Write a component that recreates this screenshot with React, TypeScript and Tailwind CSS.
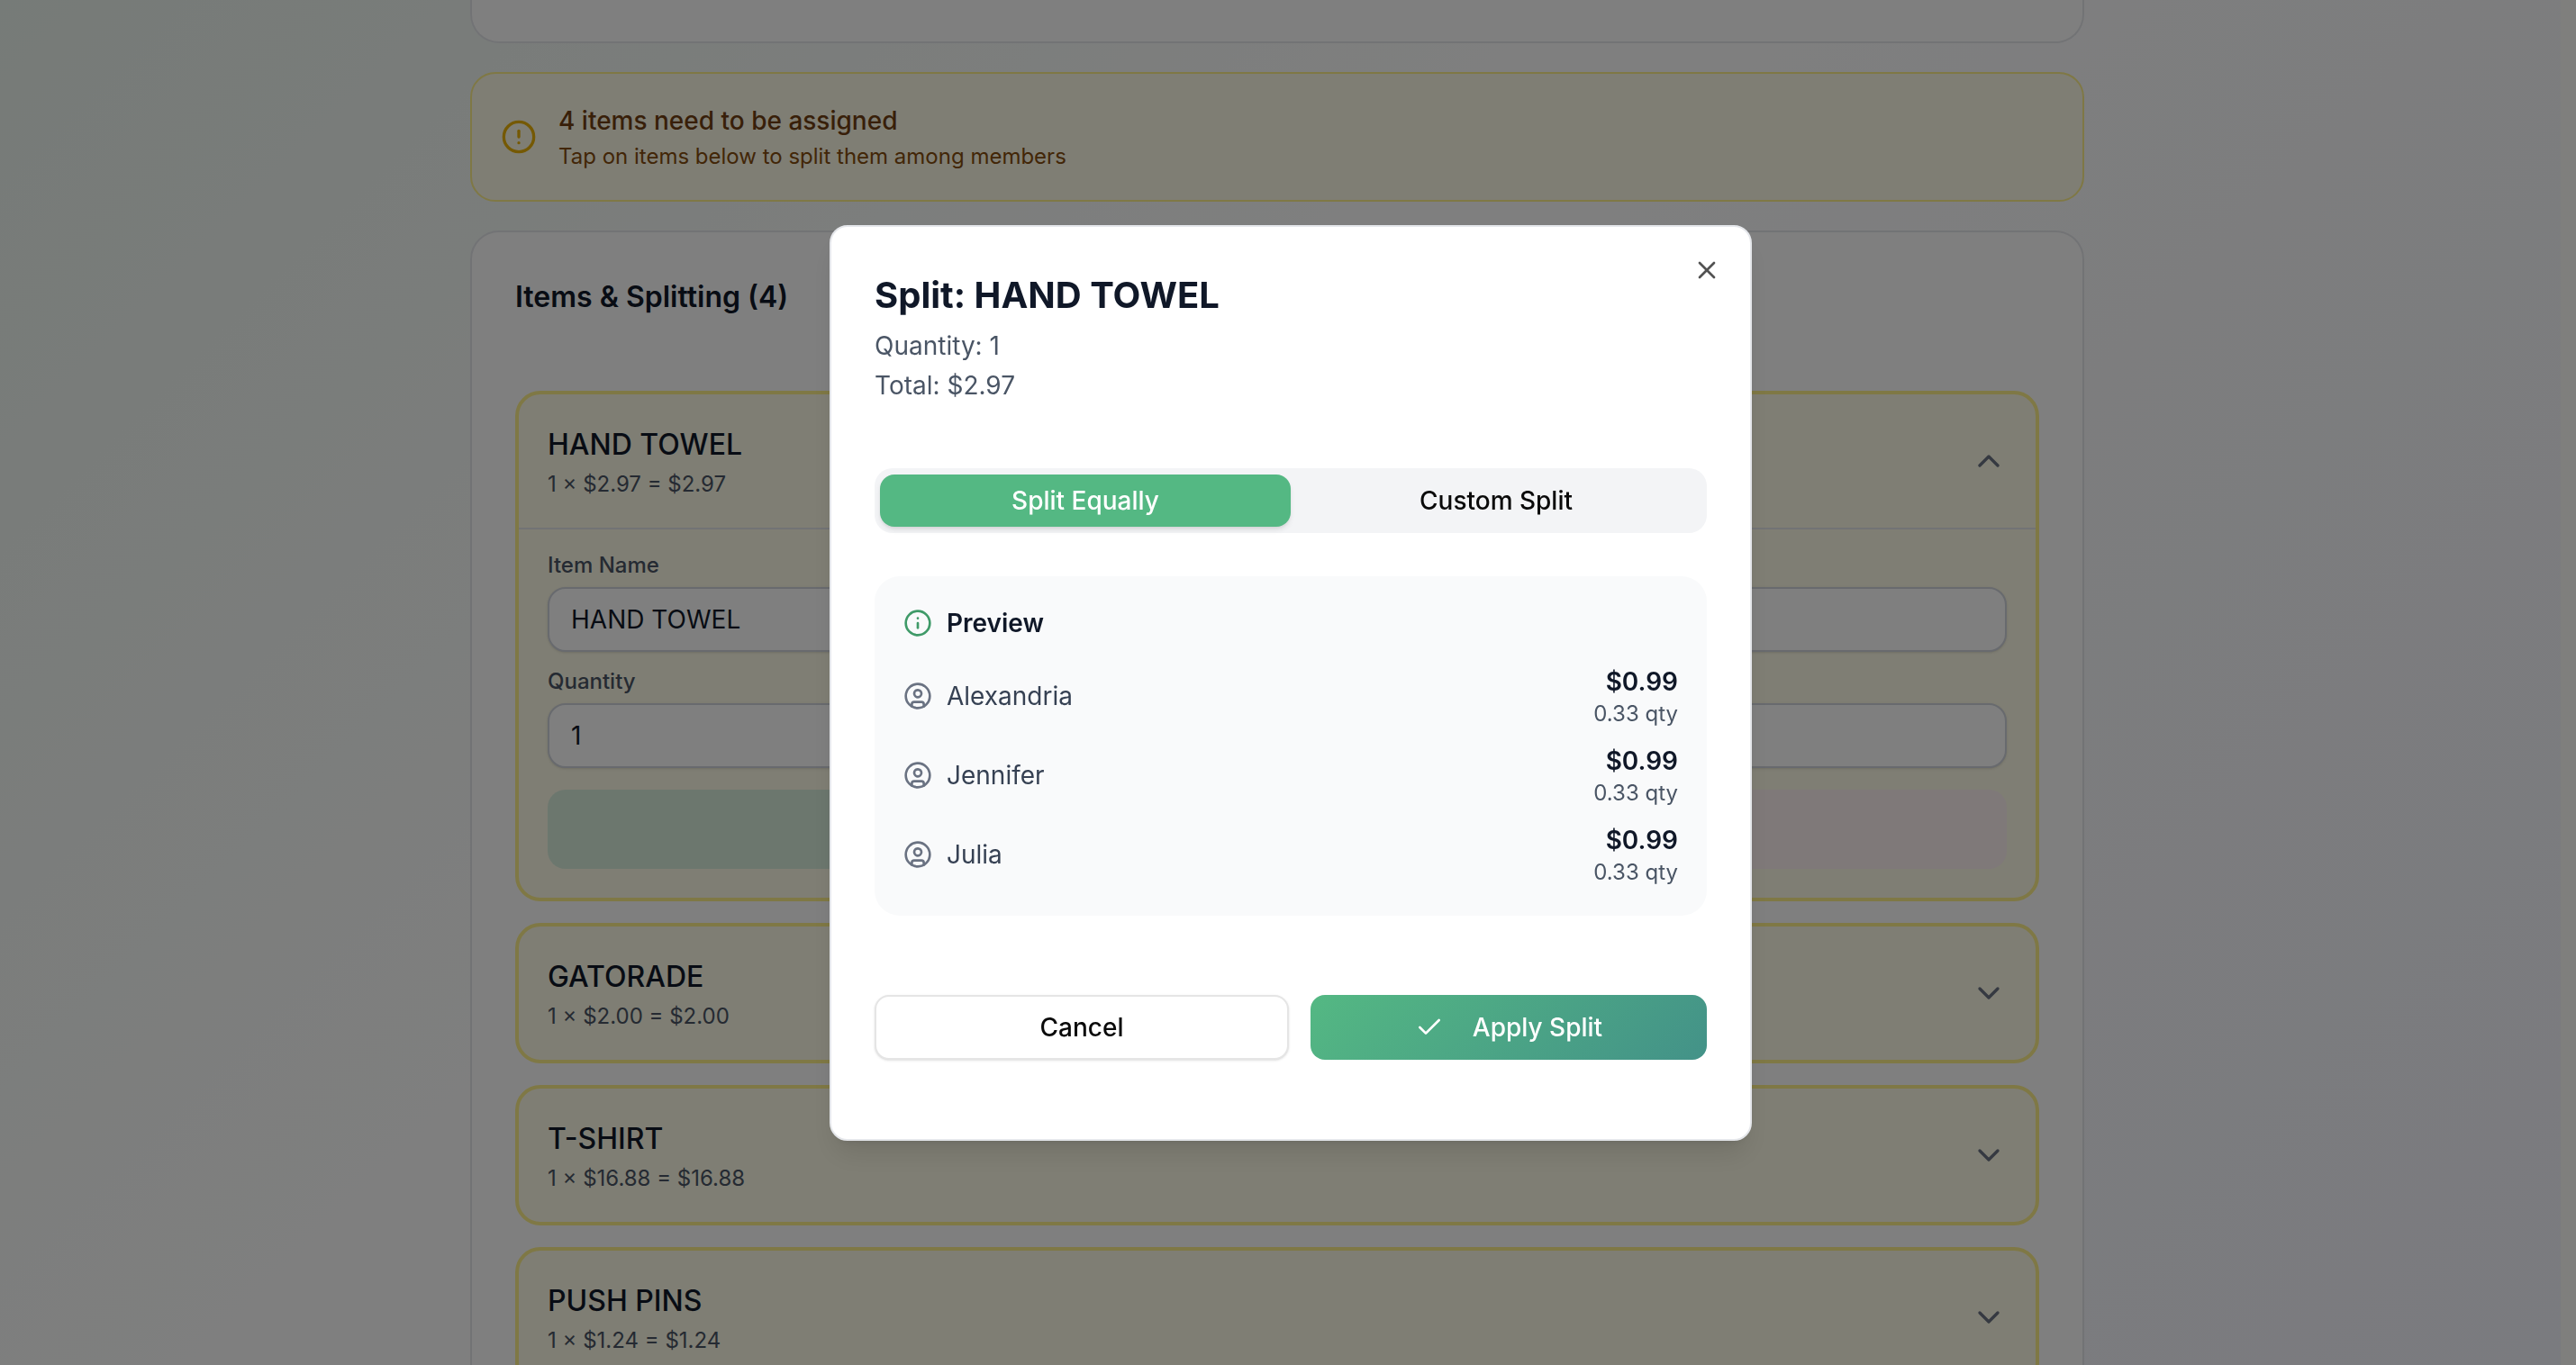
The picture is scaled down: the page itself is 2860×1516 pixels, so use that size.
import { useState } from "react";
import { Check, ChevronDown, ChevronUp, CircleAlert, CircleUser, Info, X } from "lucide-react";

interface Item {
  name: string;
  qty: number;
  price: number;
}

const items: Item[] = [
  { name: "HAND TOWEL", qty: 1, price: 2.97 },
  { name: "GATORADE", qty: 1, price: 2 },
  { name: "T-SHIRT", qty: 1, price: 16.88 },
  { name: "PUSH PINS", qty: 1, price: 1.24 },
];

const members = ["Alexandria", "Jennifer", "Julia"];

const money = (n: number) => `$${n.toFixed(2)}`;

function Field({ id, label, value }: { id: string; label: string; value: string }) {
  return (
    <div className="flex flex-col gap-2">
      <label htmlFor={id} className="text-[24px] leading-8 font-medium text-gray-600">
        {label}
      </label>
      <input
        id={id}
        defaultValue={value}
        className="h-18 w-full rounded-[20px] border-2 border-gray-300 bg-white px-6 text-[28px] text-gray-900 shadow-sm outline-none"
      />
    </div>
  );
}

function ItemCard({ item, open, onToggle }: { item: Item; open: boolean; onToggle: () => void }) {
  const Chevron = open ? ChevronUp : ChevronDown;

  return (
    <div className="shrink-0 rounded-[28px] border-4 border-[#fef08a] bg-[#fefce8]">
      <button
        onClick={onToggle}
        aria-expanded={open}
        className="flex w-full items-center justify-between p-8 text-left"
      >
        <span className="flex flex-col gap-1">
          <span className="text-[32px] leading-12 font-medium text-gray-900">{item.name}</span>
          <span className="text-[24px] leading-8 text-gray-600">
            {item.qty} × {money(item.price)} = {money(item.qty * item.price)}
          </span>
        </span>
        <Chevron size={40} className="text-gray-500" />
      </button>

      {open && (
        <div className="border-t-2 border-gray-200 px-8 pt-6 pb-8">
          <div className="flex flex-col gap-[17px]">
            <Field id="item-name" label="Item Name" value={item.name} />
            <Field id="item-qty" label="Quantity" value={String(item.qty)} />
          </div>
          <div className="mt-6 flex gap-4">
            <button aria-label="Split item" className="h-22 flex-1 rounded-[20px] bg-[#d9eedd]" />
            <button aria-label="Remove item" className="h-22 flex-1 rounded-[20px] bg-[#fef2f2]" />
          </div>
        </div>
      )}
    </div>
  );
}

function SplitDialog({ item }: { item: Item }) {
  const [mode, setMode] = useState<"equal" | "custom">("equal");
  const share = item.price / members.length;
  const shareQty = item.qty / members.length;

  const tab = "flex-1 rounded-[16px] text-[28px] leading-10 font-medium";
  const activeTab = "bg-[#54b883] text-white shadow-md";

  return (
    <div className="fixed inset-0 z-50 flex items-center justify-center bg-black/50 pl-1.5">
      <div
        role="dialog"
        aria-labelledby="split-title"
        className="relative w-full max-w-5xl rounded-[20px] border-2 border-gray-200 bg-white px-12 pt-12 pb-22 shadow-[0_20px_30px_-6px_rgba(0,0,0,0.1),0_8px_12px_-8px_rgba(0,0,0,0.1)]"
      >
        <button aria-label="Close" className="absolute top-8 right-8 text-[#0a0a0a] opacity-70">
          <X size={32} />
        </button>

        {/* Header */}
        <h2 id="split-title" className="text-[40px] leading-14 font-bold text-gray-900">
          Split: {item.name}
        </h2>
        <div className="mt-2 flex flex-col gap-1 text-[28px] leading-10 text-gray-600">
          <p>Quantity: {item.qty}</p>
          <p>Total: {money(item.price)}</p>
        </div>

        {/* Mode tabs */}
        <div role="tablist" className="mt-18 flex h-18 rounded-[20px] bg-gray-100 px-1.5 py-[7px]">
          <button
            role="tab"
            aria-selected={mode === "equal"}
            onClick={() => setMode("equal")}
            className={`${tab} ${mode === "equal" ? activeTab : "text-[#0a0a0a]"}`}
          >
            Split Equally
          </button>
          <button
            role="tab"
            aria-selected={mode === "custom"}
            onClick={() => setMode("custom")}
            className={`${tab} ${mode === "custom" ? activeTab : "text-[#0a0a0a]"}`}
          >
            Custom Split
          </button>
        </div>

        {/* Preview */}
        <div className="mt-12 rounded-[28px] bg-gray-50 p-8">
          <div className="flex items-center gap-4">
            <Info size={32} className="text-[#3f9a68]" />
            <h3 className="text-[28px] leading-10 font-semibold text-gray-900">Preview</h3>
          </div>
          <ul className="mt-[25px] flex flex-col gap-4">
            {members.map((name) => (
              <li key={name} className="flex items-center justify-between">
                <div className="flex items-center gap-4">
                  <CircleUser size={32} className="text-gray-500" />
                  <span className="text-[28px] leading-10 text-gray-700">{name}</span>
                </div>
                <div className="text-right">
                  <p className="text-[28px] leading-10 font-semibold text-gray-900">{money(share)}</p>
                  <p className="text-[24px] leading-8 text-gray-600">{shareQty.toFixed(2)} qty</p>
                </div>
              </li>
            ))}
          </ul>
        </div>

        {/* Actions */}
        <div className="mt-22 grid grid-cols-[23fr_22fr] gap-6 text-[28px] leading-10 font-medium">
          <button className="h-18 rounded-[16px] border-2 border-[#e5e5e5] bg-white text-[#0a0a0a] shadow-sm">
            Cancel
          </button>
          <button className="flex h-18 items-center justify-center gap-8 rounded-[16px] bg-[linear-gradient(135deg,#54b883,#439288)] text-white">
            <Check size={32} />
            Apply Split
          </button>
        </div>
      </div>
    </div>
  );
}

export default function App() {
  const [openItem, setOpenItem] = useState<string | null>("HAND TOWEL");

  return (
    <div className="h-screen overflow-hidden border-r-[17px] border-[#fffffb] bg-[linear-gradient(135deg,#edf6f0_0%,#ffffff_42%,#fafbfd_63%,#f5f6fe_100%)] pr-[7px] font-['Inter',sans-serif]">
      <main className="mx-auto flex max-w-[1792px] flex-col gap-8">
        <div className="h-12 shrink-0 rounded-b-[32px] border-2 border-t-0 border-gray-200 bg-white" />

        <div className="flex items-center gap-6 rounded-[28px] border-2 border-[#fef08a] bg-[#fefce8] p-8">
          <CircleAlert size={40} className="text-[#eab308]" />
          <div className="flex flex-col gap-1">
            <p className="text-[28px] leading-10 font-medium text-[#713f12]">
              {items.length} items need to be assigned
            </p>
            <p className="text-[24px] leading-8 text-[#854d0e]">
              Tap on items below to split them among members
            </p>
          </div>
        </div>

        <section className="rounded-[32px] border-2 border-gray-200 bg-white p-12">
          <h2 className="mb-20 text-[32px] leading-12 font-semibold text-gray-900">
            Items & Splitting ({items.length})
          </h2>
          <div className="flex flex-col gap-6">
            {items.map((item) => (
              <ItemCard
                key={item.name}
                item={item}
                open={openItem === item.name}
                onToggle={() => setOpenItem(openItem === item.name ? null : item.name)}
              />
            ))}
          </div>
        </section>
      </main>

      <SplitDialog item={items[0]} />
    </div>
  );
}
